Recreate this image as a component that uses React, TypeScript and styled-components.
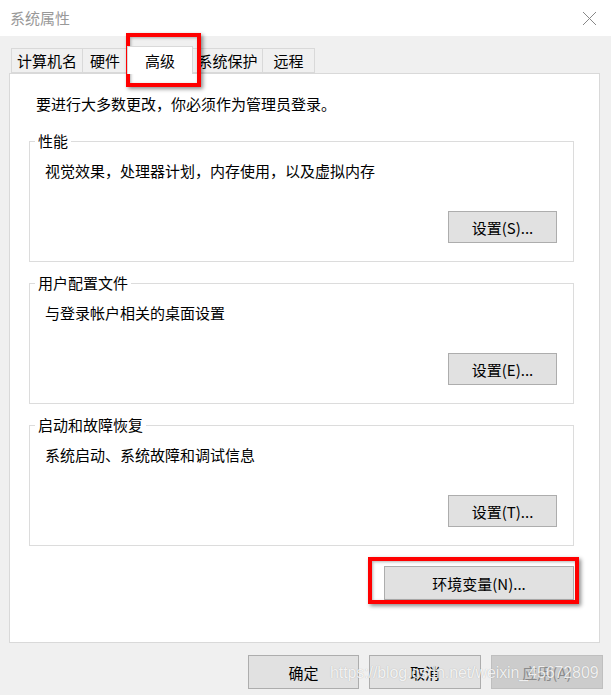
import React from 'react'
import styled, { createGlobalStyle } from 'styled-components'

const GlobalStyle = createGlobalStyle`
    html, body {
        margin: 0;
        padding: 0;
        background: #f0f0f0;
    }
    body {
        font-family: "Microsoft YaHei", "Noto Sans CJK SC", sans-serif;
        font-size: 15px;
        color: #000;
    }
`

const Window = styled.div`
    position: relative;
    width: 611px;
    height: 695px;
    background: #f0f0f0;
    display: flex;
    flex-direction: column;
    overflow: hidden;
`

const TitleBar = styled.div`
    height: 36px;
    flex: none;
    background: #fff;
    display: flex;
    align-items: center;
    justify-content: space-between;
    padding: 0 14px 0 10px;
    box-sizing: border-box;
`

const Title = styled.span`
    color: #999;
    font-size: 15px;
    line-height: 20px;
`

const Body = styled.div`
    padding: 10px 11px 0 9px;
    display: flex;
    flex-direction: column;
`

const TabRow = styled.div`
    display: flex;
    align-items: flex-end;
    padding-left: 2px;
`

const Tab = styled.div<{ $width: number; $active?: boolean }>`
    box-sizing: border-box;
    width: ${({ $width }) => $width}px;
    height: ${({ $active }) => ($active ? 28 : 25)}px;
    margin-left: -1px;
    margin-bottom: ${({ $active }) => ($active ? -1 : 0)}px;
    border: 1px solid #d9d9d9;
    border-bottom: ${({ $active }) => ($active ? 'none' : '1px solid #d9d9d9')};
    background: ${({ $active }) => ($active ? '#fff' : '#f0f0f0')};
    position: relative;
    z-index: ${({ $active }) => ($active ? 1 : 0)};
    display: flex;
    align-items: center;
    justify-content: center;
    line-height: 20px;
    white-space: nowrap;

    &:first-child {
        margin-left: 0;
    }
`

const Panel = styled.div`
    background: #fff;
    border: 1px solid #d9d9d9;
    padding: 20px 25px 42px 19px;
    display: flex;
    flex-direction: column;
`

const Intro = styled.div`
    line-height: 20px;
    margin-left: 7px;
    margin-bottom: 17px;
`

const Group = styled.fieldset`
    margin: 0 0 11px 0;
    padding: 10px 16px 18px 15px;
    border: 1px solid #dcdcdc;
    min-width: 0;
    display: flex;
    flex-direction: column;
`

const Legend = styled.legend`
    padding: 0 3px;
    margin-left: -10px;
    line-height: 20px;
`

const GroupText = styled.div`
    line-height: 20px;
    margin-bottom: 30px;
`

const Button = styled.button<{ $width: number; $height?: number }>`
    width: ${({ $width }) => $width}px;
    height: ${({ $height }) => $height ?? 32}px;
    box-sizing: border-box;
    background: #e1e1e1;
    border: 1px solid #adadad;
    font-family: inherit;
    font-size: 15px;
    color: #000;
    padding: 0;
    align-self: flex-end;

    &:disabled {
        background: #cccccc;
        border-color: #bfbfbf;
        color: #8a8a8a;
    }
`

const EnvButton = styled(Button)`
    margin-top: 9px;
    margin-right: 0;
`

const Footer = styled.div`
    display: flex;
    justify-content: flex-end;
    gap: 10px;
    margin: 12px -3px 0 0;
`

const Highlight = styled.div<{ $x: number; $y: number; $w: number; $h: number }>`
    position: absolute;
    left: ${({ $x }) => $x}px;
    top: ${({ $y }) => $y}px;
    width: ${({ $w }) => $w}px;
    height: ${({ $h }) => $h}px;
    box-sizing: border-box;
    border: 4px solid #ff0000;
    box-shadow: 2px 2px 4px rgba(0, 0, 0, 0.45), inset 1px 1px 3px rgba(0, 0, 0, 0.3);
    pointer-events: none;
`

const Watermark = styled.div`
    position: absolute;
    left: 330px;
    top: 664px;
    font-family: "Liberation Sans", Arial, sans-serif;
    font-size: 16px;
    letter-spacing: -0.1px;
    color: rgba(255, 255, 255, 0.85);
    text-shadow: 0 0 1px rgba(0, 0, 0, 0.25);
    pointer-events: none;
`

const CloseIcon = () => (
    <svg width="15" height="15" viewBox="0 0 15 15">
        <path d="M1 1 L14 14 M14 1 L1 14" stroke="#888" strokeWidth="1" fill="none" />
    </svg>
)

const tabs = [
    { label: '计算机名', width: 72 },
    { label: '硬件', width: 46 },
    { label: '高级', width: 66, active: true },
    { label: '系统保护', width: 71 },
    { label: '远程', width: 53 },
]

const groups = [
    { title: '性能', text: '视觉效果，处理器计划，内存使用，以及虚拟内存', button: '设置(S)...' },
    { title: '用户配置文件', text: '与登录帐户相关的桌面设置', button: '设置(E)...' },
    { title: '启动和故障恢复', text: '系统启动、系统故障和调试信息', button: '设置(T)...' },
]

const App = () => {
    return (
        <Window>
            <GlobalStyle />
            <TitleBar>
                <Title>系统属性</Title>
                <CloseIcon />
            </TitleBar>
            <Body>
                <TabRow>
                    {tabs.map(tab => (
                        <Tab key={tab.label} $width={tab.width} $active={tab.active}>{tab.label}</Tab>
                    ))}
                </TabRow>
                <Panel>
                    <Intro>要进行大多数更改，你必须作为管理员登录。</Intro>
                    {groups.map(group => (
                        <Group key={group.title}>
                            <Legend>{group.title}</Legend>
                            <GroupText>{group.text}</GroupText>
                            <Button $width={109}>{group.button}</Button>
                        </Group>
                    ))}
                    <EnvButton $width={190} $height={34}>环境变量(N)...</EnvButton>
                </Panel>
                <Footer>
                    <Button $width={111} $height={34}>确定</Button>
                    <Button $width={112} $height={34}>取消</Button>
                    <Button $width={112} $height={34} disabled>应用(A)</Button>
                </Footer>
            </Body>
            <Highlight $x={126} $y={33} $w={75} $h={54} />
            <Highlight $x={368} $y={557} $w={211} $h={47} />
            <Watermark>https://blog.csdn.net/weixin_45672809</Watermark>
        </Window>
    )
}

export default App
